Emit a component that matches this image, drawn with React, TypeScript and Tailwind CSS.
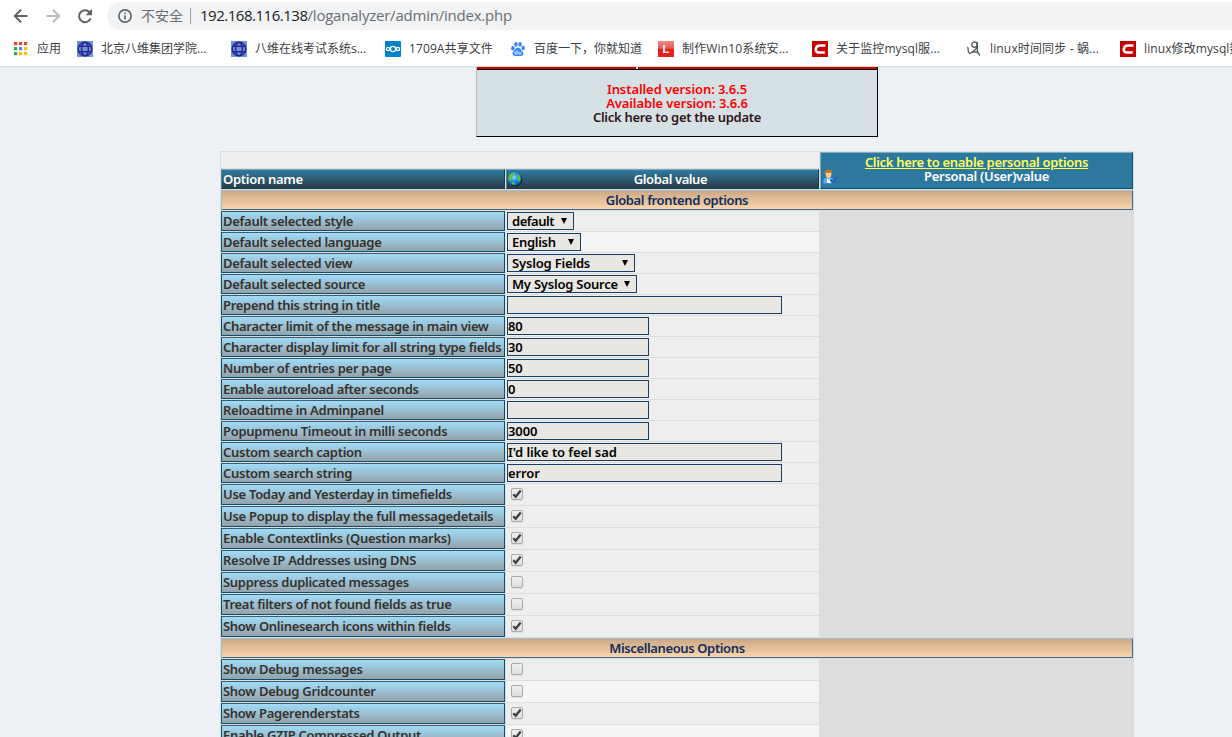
import type { ReactNode } from "react";
import { clsx } from "clsx";

type Field =
  | { kind: "select"; value: string; width: string; textWidth: string }
  | { kind: "text"; value: string; width: string }
  | { kind: "check"; checked: boolean };

type Option = { label: string; field: Field; light?: boolean };

const short = "w-[142px]";
const long = "w-[275px]";

const frontendOptions: Option[] = [
  { label: "Default selected style", field: { kind: "select", value: "default", width: "w-[67px]", textWidth: "w-[49px] tracking-[-0.5px]" } },
  { label: "Default selected language", field: { kind: "select", value: "English", width: "w-[74px]", textWidth: "w-[56px] tracking-[-0.3px]" }, light: true },
  { label: "Default selected view", field: { kind: "select", value: "Syslog Fields", width: "w-[128px]", textWidth: "w-[110px] tracking-[-0.18px]" } },
  { label: "Default selected source", field: { kind: "select", value: "My Syslog Source", width: "w-[130px]", textWidth: "w-[112px] tracking-[-0.22px]" } },
  { label: "Prepend this string in title", field: { kind: "text", value: "", width: long } },
  { label: "Character limit of the message in main view", field: { kind: "text", value: "80", width: short } },
  { label: "Character display limit for all string type fields", field: { kind: "text", value: "30", width: short } },
  { label: "Number of entries per page", field: { kind: "text", value: "50", width: short } },
  { label: "Enable autoreload after seconds", field: { kind: "text", value: "0", width: short } },
  { label: "Reloadtime in Adminpanel", field: { kind: "text", value: "", width: short } },
  { label: "Popupmenu Timeout in milli seconds", field: { kind: "text", value: "3000", width: short } },
  { label: "Custom search caption", field: { kind: "text", value: "I'd like to feel sad", width: long } },
  { label: "Custom search string", field: { kind: "text", value: "error", width: long } },
  { label: "Use Today and Yesterday in timefields", field: { kind: "check", checked: true } },
  { label: "Use Popup to display the full messagedetails", field: { kind: "check", checked: true } },
  { label: "Enable Contextlinks (Question marks)", field: { kind: "check", checked: true } },
  { label: "Resolve IP Addresses using DNS", field: { kind: "check", checked: true } },
  { label: "Suppress duplicated messages", field: { kind: "check", checked: false } },
  { label: "Treat filters of not found fields as true", field: { kind: "check", checked: false } },
  { label: "Show Onlinesearch icons within fields", field: { kind: "check", checked: true } },
];

const miscOptions: Option[] = [
  { label: "Show Debug messages", field: { kind: "check", checked: false } },
  { label: "Show Debug Gridcounter", field: { kind: "check", checked: false }, light: true },
  { label: "Show Pagerenderstats", field: { kind: "check", checked: true } },
  { label: "Enable GZIP Compressed Output", field: { kind: "check", checked: true }, light: true },
];

export default function App() {
  return (
    <div className="flex h-[737px] w-[1232px] flex-col overflow-hidden bg-[#edf1f6]">
      <BrowserChrome />
      <main className="flex min-h-0 flex-1 flex-col overflow-hidden font-['Noto_Sans',sans-serif] text-[13px] font-semibold tracking-[-0.29px]">
        <UpdateNotice />
        <OptionsTable />
      </main>
    </div>
  );
}

function BrowserChrome() {
  return (
    <header className="h-[67px] shrink-0 border-b border-[#dadce0] bg-white font-['Open_Sans','Noto_Sans_CJK_SC',sans-serif]">
      <div className="flex h-[30px] pt-[2px]">
        <div className="flex w-[107px] shrink-0 items-center gap-4 pl-[13px] text-[#5f6368]">
          <NavIcon d="M14.5 8H2.2M8 1.8 1.8 8 8 14.2" />
          <NavIcon d="M1.5 8h12.3M8 1.8 14.2 8 8 14.2" dim />
          <svg viewBox="0 0 16 16" className="size-4" fill="none" stroke="currentColor" strokeWidth="2">
            <path d="M13.600 10.500A6 6 0 1 1 12.400 4" />
            <path d="M15 .8v6.400H8.600z" fill="currentColor" stroke="none" />
          </svg>
        </div>
        <div className="flex h-7 flex-1 items-center rounded-l-full bg-[#f1f3f4] pl-[11px] text-[#6a6e73]">
          <svg viewBox="0 0 14 14" className="size-[14px]" fill="none" stroke="#5f6368" strokeWidth="1.600">
            <circle cx="7" cy="7" r="6.100" />
            <path d="M7 6.200v4.200M7 3.400v1.700" />
          </svg>
          <span className="ml-[9px] w-[43px] text-sm whitespace-nowrap">不安全</span>
          <span className="mr-[7px] ml-[6px] h-4 w-px bg-[#9aa0a6]" />
          <span className="ml-[2px] pb-px text-[15px] tracking-[-0.22px] whitespace-nowrap">
            <span className="tracking-[-0.48px] text-[#202124]">192.168.116.138</span>/loganalyzer/admin/index.php
          </span>
        </div>
      </div>
      <nav className="flex h-9 items-center pt-px text-[12px] whitespace-nowrap text-[#3c4043]">
        <Bookmark className="ml-[13px] w-[64px]" label="应用" icon={<AppsIcon />} />
        <Bookmark className="w-[154px]" label="北京八维集团学院..." icon={<GlobeTile />} />
        <Bookmark className="w-[154px]" label="八维在线考试系统s..." icon={<GlobeTile />} />
        <Bookmark className="w-[125px] tracking-[0.1px]" label="1709A共享文件" icon={<CloudTile />} />
        <Bookmark className="w-[148px]" label="百度一下，你就知道" icon={<PawIcon />} />
        <Bookmark className="w-[154px] tracking-[0.15px]" label="制作Win10系统安..." icon={<LetterTile />} />
        <Bookmark className="w-[154px] tracking-[0.1px]" label="关于监控mysql服..." icon={<RedCTile />} />
        <Bookmark className="w-[154px] tracking-[0.15px]" label="linux时间同步 - 蜗..." icon={<SnailIcon />} />
        <Bookmark className="w-[112px] tracking-[0.1px]" label="linux修改mysql数" icon={<RedCTile />} />
      </nav>
    </header>
  );
}

function NavIcon({ d, dim }: { d: string; dim?: boolean }) {
  return (
    <svg viewBox="0 0 16 16" className={clsx("size-4", dim && "text-[#babcbe]")} fill="none" stroke="currentColor" strokeWidth="2">
      <path d={d} />
    </svg>
  );
}

function Bookmark({ icon, label, className }: { icon: ReactNode; label: string; className: string }) {
  return (
    <div className={clsx("flex shrink-0 items-center overflow-hidden", className)}>
      <span className="size-4 shrink-0">{icon}</span>
      <span className="ml-2">{label}</span>
    </div>
  );
}

function AppsIcon() {
  const colors = ["#ea4335", "#ea4335", "#ea4335", "#34a853", "#4285f4", "#fbbc05", "#34a853", "#fbbc05", "#fbbc05"];
  return (
    <svg viewBox="0 0 16 16" className="size-4">
      {colors.map((color, i) => (
        <rect key={i} x={1 + (i % 3) * 5} y={1 + Math.floor(i / 3) * 5} width="3.2" height="3.2" fill={color} />
      ))}
    </svg>
  );
}

function GlobeTile() {
  return (
    <svg viewBox="0 0 16 16" className="size-4" fill="none" stroke="#29259a" strokeWidth="1.5">
      <rect width="16" height="16" fill="#6a95cf" stroke="none" />
      <circle cx="8" cy="8" r="6.8" />
      <ellipse cx="8" cy="8" rx="3.4" ry="6.8" />
      <path d="M1.8 5.2h12.4M1.8 10.8h12.4" />
    </svg>
  );
}

function CloudTile() {
  return (
    <svg viewBox="0 0 16 16" className="size-4" fill="none" stroke="#fff" strokeWidth="1.2">
      <rect width="16" height="16" rx="1" fill="#0082c9" stroke="none" />
      <circle cx="8" cy="8" r="2.6" />
      <circle cx="3" cy="8" r="1.6" />
      <circle cx="13" cy="8" r="1.6" />
    </svg>
  );
}

function PawIcon() {
  return (
    <svg viewBox="0 0 16 16" className="size-4" fill="#3385ff">
      <ellipse cx="2.9" cy="7.2" rx="1.8" ry="2.2" />
      <ellipse cx="5.9" cy="3.4" rx="1.7" ry="2.3" />
      <ellipse cx="10.1" cy="3.4" rx="1.7" ry="2.3" />
      <ellipse cx="13.2" cy="7" rx="1.7" ry="2.2" />
      <path d="M8 6.6c1.8 0 2.3 1.6 3.6 2.8 1.5 1.3 2.4 2.5 1.6 4.2-.9 2-3.3 1.5-5.2 1.5s-4.3.5-5.2-1.5c-.8-1.7.1-2.9 1.6-4.2C5.7 8.2 6.2 6.6 8 6.6z" />
      <path d="M7.2 9.3v3.8H5.6c-1.3 0-1.3-2.2 0-2.2h1.600M9 10.800v2.300h2v-2.300" fill="none" stroke="#fff" strokeWidth=".8" />
    </svg>
  );
}

function LetterTile() {
  return (
    <span className="flex size-4 items-center justify-center bg-linear-to-b from-[#ee8a85] via-[#e55a55] via-45% to-[#e2231a] to-50% font-['Liberation_Sans',sans-serif] text-[11px] leading-4 font-bold text-white">
      L
    </span>
  );
}

function RedCTile() {
  return (
    <svg viewBox="0 0 16 16" className="size-4">
      <rect width="16" height="16" fill="#c90000" />
      <path d="M13.500 4.500H8C5.200 4.500 4 6.200 3.800 8.200c-.2 2.200 1 3.300 3.200 3.300h5.800" fill="none" stroke="#fff" strokeWidth="2.600" />
    </svg>
  );
}

function SnailIcon() {
  return (
    <svg viewBox="0 0 16 16" className="size-4" fill="none" stroke="#555" strokeWidth="1.300">
      <circle cx="8.500" cy="3.600" r="2.700" />
      <path d="M1.200 6.500c1.300-.2.800 2.200 1.100 4 .3 1.700 1.600 2.200 3.200 1.300l4.800-4.300c1.400-1.400 1.500-2.600 1.100-4.300" />
      <path d="M11.200 1v7c0 2.500.6 4.500 2.600 6.500M6.500 11h5" />
    </svg>
  );
}

function UpdateNotice() {
  return (
    <section className="ml-[476px] flex h-[70px] w-[402px] shrink-0 flex-col border-r border-b border-l border-black border-l-[#b8bcc0] bg-[#d6e1e6]">
      <div className="flex h-[3px] shrink-0 border-b border-black bg-[#c80000]">
        <span className="ml-[159px] h-[2px] w-[2px] bg-white" />
      </div>
      <div className="pt-3 text-center leading-[14px] text-[#f00]">
        <p className="tracking-[-0.08px]">Installed version: 3.6.5</p>
        <p className="tracking-[-0.12px]">Available version: 3.6.6</p>
        <p className="text-[#301518]">Click here to get the update</p>
      </div>
    </section>
  );
}

function OptionsTable() {
  return (
    <section className="mt-[14px] ml-[220px] flex w-[914px] flex-col gap-px bg-[#ddd] p-px">
      <div className="flex h-[37px] gap-px text-white">
        <div className="flex w-[598px] flex-col gap-px">
          <div className="h-4 bg-[#eee]" />
          <div className="flex h-5 gap-px">
            <HeaderCell className="w-[284px] pl-px">Option name</HeaderCell>
            <HeaderCell className="w-[313px]">
              <GlobeIcon />
              <span className="flex-1 pb-px text-center tracking-[-0.4px]">Global value</span>
            </HeaderCell>
          </div>
        </div>
        <div className="flex w-[313px] items-end border border-[#0c5068] border-t-[#7cb0c6] border-l-[#7cb0c6] bg-[#2d789f]">
          <UserIcon />
          <div className="flex-1 self-start pt-[2px] pr-[17px] text-center leading-[14px]">
            <p className="tracking-[-0.32px] text-[#ffff55] underline">Click here to enable personal options</p>
            <p className="pl-5">Personal (User)value</p>
          </div>
        </div>
      </div>
      <GroupTitle>Global frontend options</GroupTitle>
      {frontendOptions.map((option) => (
        <OptionRow key={option.label} option={option} />
      ))}
      <GroupTitle>Miscellaneous Options</GroupTitle>
      {miscOptions.map((option) => (
        <OptionRow key={option.label} option={option} />
      ))}
    </section>
  );
}

function HeaderCell({ className, children }: { className: string; children: ReactNode }) {
  return (
    <div
      className={clsx(
        "flex h-5 items-center border border-[#173c4a] border-t-[#7caabd] border-l-[#4d879c] bg-linear-to-b from-[#2d7ba2] to-[#283d47] leading-[18px]",
        className,
      )}
    >
      {children}
    </div>
  );
}

function GroupTitle({ children }: { children: ReactNode }) {
  return (
    <h2 className="h-5 shrink-0 border border-[#3a6a9c] border-t-[#a5bdd3] border-l-[#a5bdd3] bg-linear-to-b from-[#cba985] to-[#fbd5ad] text-center leading-[18px] tracking-[-0.38px] text-[#0e2c5c]">
      {children}
    </h2>
  );
}

function OptionRow({ option }: { option: Option }) {
  const { label, field, light } = option;
  return (
    <div className={clsx("flex shrink-0 gap-px", field.kind === "check" ? "h-[21px]" : "h-5")}>
      <div className="w-[284px] border border-[#0c5070] border-t-[#3a5f73] bg-linear-to-b from-[#9fdcf8] to-[#94a2ab] pl-px leading-[18px] whitespace-nowrap text-[#35312c]">
        {label}
      </div>
      <div className={clsx("w-[313px] p-px text-black", light ? "bg-[#f5f5f5]" : "bg-[#eee]")}>
        <FieldControl field={field} />
      </div>
    </div>
  );
}

function FieldControl({ field }: { field: Field }) {
  if (field.kind === "check") {
    return (
      <div className="mt-[3px] ml-1 size-3 rounded-[2px] border border-[#aaa] bg-linear-to-b from-[#f0f0f0] to-[#dedede] shadow-[0_1px_1px_#ddd]">
        {field.checked ? (
          <svg viewBox="0 0 10 10" className="size-[10px]" fill="none" stroke="#3f3f3f" strokeWidth="2.3">
            <path d="M1.3 5.3 3.7 7.8 8.7 1.5" />
          </svg>
        ) : null}
      </div>
    );
  }

  return (
    <div className={clsx("flex h-[18px] border border-[#164069] bg-[#e8e7e1] leading-4 whitespace-nowrap", field.width)}>
      {field.kind === "select" ? (
        <>
          <span className={clsx("shrink-0 pl-1", field.textWidth)}>{field.value}</span>
          <svg viewBox="0 0 14 16" className="h-4 w-[14px]">
            <path d="M4 5h6L7 11z" />
          </svg>
        </>
      ) : (
        <span className="tracking-[-0.1px]">{field.value}</span>
      )}
    </div>
  );
}

function GlobeIcon() {
  return (
    <svg viewBox="0 0 16 16" className="size-4 shrink-0">
      <defs>
        <radialGradient id="ocean" cx=".45" cy=".4" r=".65">
          <stop offset="0" stopColor="#8fe0ff" />
          <stop offset=".5" stopColor="#1c8ce0" />
          <stop offset="1" stopColor="#0d4fa8" />
        </radialGradient>
      </defs>
      <circle cx="9" cy="9" r="6.6" fill="#12242e" opacity=".7" />
      <circle cx="7.5" cy="7.5" r="6.8" fill="url(#ocean)" />
      <path d="M2 4.500C3.500 2 6 1 8 1.200L7 3.500 6 5.500 4.500 8 3 10.500 1 8zM10.500 2.500l2 2 1.300 4-1.800 2.500-1.500-3 .5-2zM4 11l3.500.5.5 2.300-2.500-.5z" fill="#5cc33e" />
    </svg>
  );
}

function UserIcon() {
  return (
    <svg viewBox="0 0 16 16" className="mb-[3px] ml-[1px] size-4 shrink-0">
      <path d="M1.500 14.500c-.8-3 .3-6 3.500-6h3c3 0 4 2.500 3.500 6z" fill="#63a9ee" />
      <path d="M5 9l2 2 1.500-2 .5 5H5z" fill="#f3f6fb" />
      <path d="M3.500 4.500C3.500 2 9.500 2 9.500 4.500S8.500 9 6.500 9s-3-2-3-4.500z" fill="#f6c98e" />
      <path d="M2.500 5C2 1.500 4 .5 6.500.5s4.500 1.200 4 4.500L9 3.800H4.500z" fill="#b97a1c" />
      <path d="M8.500 10.500l2.300 2.700 3.700-5" fill="none" stroke="#1b63c5" strokeWidth="2.200" />
    </svg>
  );
}
